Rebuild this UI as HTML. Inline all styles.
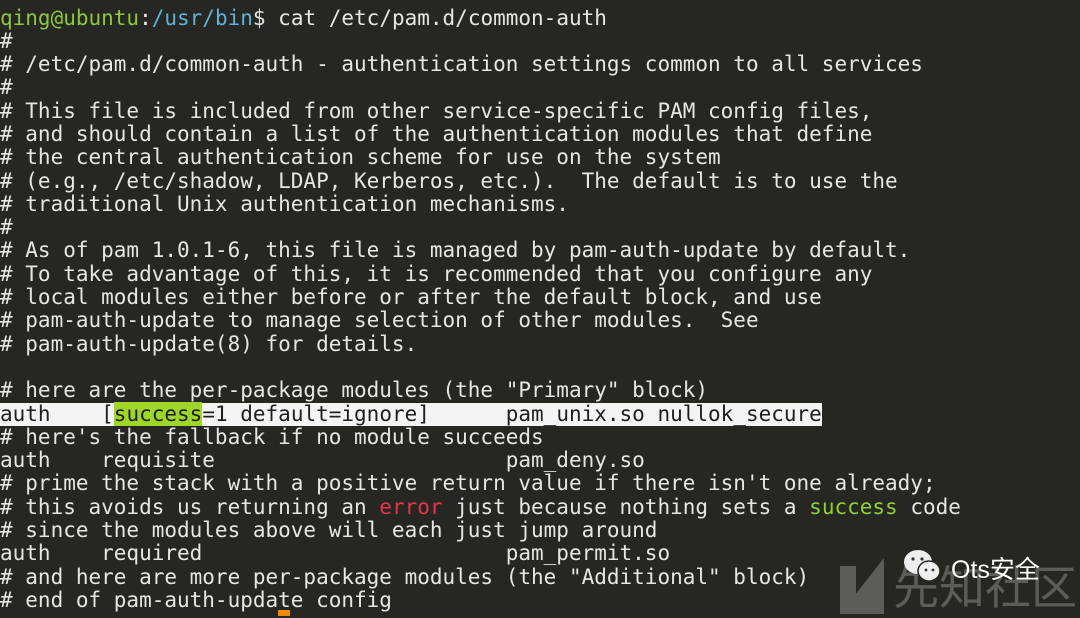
<!DOCTYPE html>
<html><head><meta charset="utf-8"><style>
html,body{margin:0;padding:0;width:1080px;height:616px;overflow:hidden;background:#262622;}
pre{position:absolute;left:0;top:6.5px;margin:0;font-family:"DejaVu Sans Mono","Liberation Mono",monospace;font-size:21px;line-height:23.3px;color:#e6e6e6;white-space:pre;}
.g{color:#8dc63f}.b{color:#5fb3d9}.r{color:#e8334a}.s{color:#8dd22f}
.hl{background:#f4f4f4;color:#1e1e1e;display:inline-block;width:822px}
.hg{background:#9fd62a}
.cur{position:absolute;left:278px;top:610px;width:12px;height:6px;background:#f08a00}
.wm{position:absolute;top:552px;font-family:"Noto Sans CJK SC",sans-serif;font-size:46px;color:#5c5c58;}
.tri{position:absolute;left:838px;top:558px;}
.wx{position:absolute;top:550px;font-family:"Liberation Sans","Noto Sans CJK SC",sans-serif;font-size:25px;color:#fff;}
</style></head><body>
<pre><span class="g">qing@ubuntu</span>:<span class="b">/usr/bin</span>$ cat /etc/pam.d/common-auth
#
# /etc/pam.d/common-auth - authentication settings common to all services
#
# This file is included from other service-specific PAM config files,
# and should contain a list of the authentication modules that define
# the central authentication scheme for use on the system
# (e.g., /etc/shadow, LDAP, Kerberos, etc.).  The default is to use the
# traditional Unix authentication mechanisms.
#
# As of pam 1.0.1-6, this file is managed by pam-auth-update by default.
# To take advantage of this, it is recommended that you configure any
# local modules either before or after the default block, and use
# pam-auth-update to manage selection of other modules.  See
# pam-auth-update(8) for details.

# here are the per-package modules (the "Primary" block)
<span class="hl">auth    [<span class="hg">success</span>=1 default=ignore]      pam_unix.so nullok_secure</span>
# here's the fallback if no module succeeds
auth    requisite                       pam_deny.so
# prime the stack with a positive return value if there isn't one already;
# this avoids us returning an <span class="r">error</span> just because nothing sets a <span class="s">success</span> code
# since the modules above will each just jump around
auth    required                        pam_permit.so
# and here are more per-package modules (the "Additional" block)
# end of pam-auth-update config</pre>
<div class="cur"></div>
<svg class="tri" width="46" height="56"><polygon points="2,56 46,0 46,56 22,56" fill="#5c5c58"/><rect x="2" y="8" width="16" height="48" fill="#5c5c58"/></svg>
<div class="wm" style="left:893px">先知社区</div>
<svg style="position:absolute;left:902px;top:548px" width="40" height="36"><ellipse cx="16" cy="14" rx="14" ry="12" fill="#eee"/><ellipse cx="27" cy="23" rx="11" ry="10" fill="#eee" stroke="#262622" stroke-width="1.5"/><circle cx="11" cy="11" r="1.6" fill="#333"/><circle cx="20" cy="11" r="1.6" fill="#333"/><circle cx="24" cy="22" r="1.4" fill="#333"/><circle cx="31" cy="22" r="1.4" fill="#333"/></svg>
<div class="wx" style="left:951px">Ots安全</div>
</body></html>
